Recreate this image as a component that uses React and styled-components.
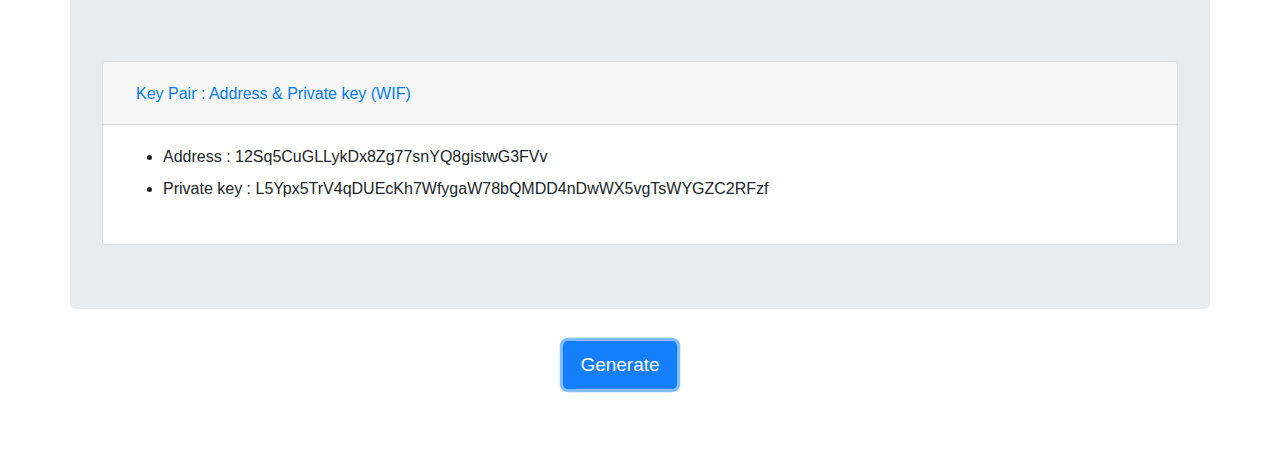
import React from "react";
import styled, { createGlobalStyle } from "styled-components";

const GlobalStyle = createGlobalStyle`
	html, body {
		margin: 0;
		padding: 0;
		background: #fff;
	}
	body {
		font-family: "Liberation Sans", Arial, sans-serif;
		font-size: 16px;
		line-height: 1.5;
		color: #212529;
		min-height: 460px;
	}
	* {
		box-sizing: border-box;
	}
`;

const Container = styled.div`
	width: 1140px;
	margin: 0 auto;
	padding-bottom: 40px;
`;

// top of the jumbotron is scrolled off-screen in the reference
const Jumbotron = styled.div`
	background: #e9ecef;
	border-radius: 0 0 4.8px 4.8px;
	padding: 61px 32px 64px;
	margin-bottom: 32px;
`;

const Card = styled.div`
	background: #fff;
	border: 1px solid rgba(0, 0, 0, 0.125);
	border-radius: 4px;
	overflow: hidden;
`;

const CardHeader = styled.div`
	padding: 12px 20px;
	background: rgba(0, 0, 0, 0.03);
	border-bottom: 1px solid rgba(0, 0, 0, 0.125);
`;

const LinkButton = styled.button`
	font-family: inherit;
	font-size: 16px;
	line-height: 24px;
	padding: 7px 12px 5px;
	border: 1px solid transparent;
	background: transparent;
	color: #007bff;
	cursor: pointer;
`;

const CardBody = styled.div`
	padding: 20px;
`;

const KeyList = styled.ul`
	margin: 0 0 15px;
	padding-left: 40px;
`;

const KeyItem = styled.li`
	line-height: 24px;
	padding-bottom: 8px;
`;

const ButtonRow = styled.div`
	display: flex;
	justify-content: center;
	padding-right: 40px;
`;

const GenerateButton = styled.button`
	font-family: inherit;
	font-size: 19px;
	line-height: 30px;
	padding: 8px 16px;
	border-radius: 4.8px;
	border: 1px solid #007bff;
	background: #157efb;
	color: #fff;
	box-shadow: 0 0 0 3.2px rgba(0, 123, 255, 0.5);
	cursor: pointer;
`;

export default function App() {
	return (
		<React.Fragment>
			<GlobalStyle />
			<Container>
				<Jumbotron>
					<Card>
						<CardHeader>
							<LinkButton type="button">
								Key Pair : Address &amp; Private key (WIF)
							</LinkButton>
						</CardHeader>
						<CardBody>
							<KeyList>
								<KeyItem>Address : 12Sq5CuGLLykDx8Zg77snYQ8gistwG3FVv</KeyItem>
								<KeyItem>
									Private key : L5Ypx5TrV4qDUEcKh7WfygaW78bQMDD4nDwWX5vgTsWYGZC2RFzf
								</KeyItem>
							</KeyList>
						</CardBody>
					</Card>
				</Jumbotron>
				<ButtonRow>
					<GenerateButton type="button">Generate</GenerateButton>
				</ButtonRow>
			</Container>
		</React.Fragment>
	);
}
